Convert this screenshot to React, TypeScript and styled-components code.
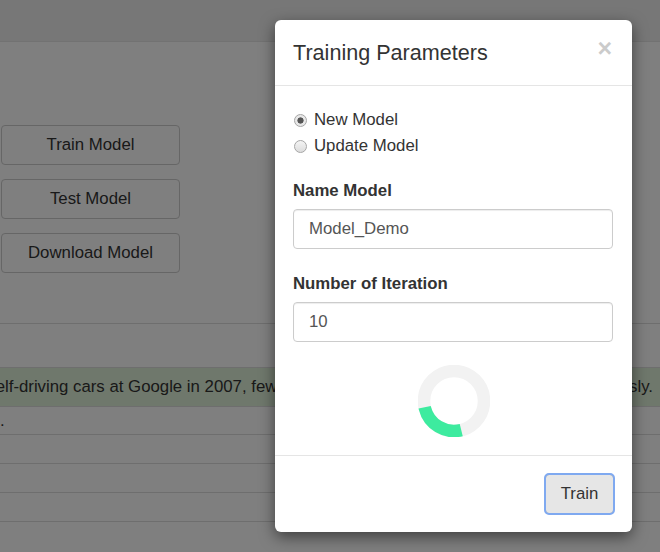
import React from "react";
import styled, { createGlobalStyle } from "styled-components";

const GlobalStyle = createGlobalStyle`
  html, body {
    margin: 0;
    padding: 0;
    width: 660px;
    height: 552px;
    overflow: hidden;
    background: #fff;
    font-family: "Liberation Sans", Arial, sans-serif;
    color: #333;
  }
  * { box-sizing: border-box; }
`;

const Page = styled.div`
  position: relative;
  width: 660px;
  height: 552px;
  overflow: hidden;
  background: #fff;
`;

const Navbar = styled.div`
  height: 42px;
  background: #eee;
  border-bottom: 1px solid #e4e4e4;
`;

const Content = styled.div`
  padding: 83px 0 0 1px;
`;

const ActionList = styled.div`
  display: flex;
  flex-direction: column;
  gap: 14px;
  width: 179px;
`;

const ActionButton = styled.button`
  height: 40px;
  background: #fff;
  border: 1px solid #ccc;
  border-radius: 4px;
  font-family: inherit;
  font-size: 16.8px;
  color: #333;
`;

const Divider = styled.div`
  margin-top: 50px;
  border-top: 1px solid #ddd;
  height: 44px;
`;

const Table = styled.div`
  display: flex;
  flex-direction: column;
`;

const Row = styled.div<{ $success?: boolean; $h: number }>`
  height: ${(p) => p.$h}px;
  display: flex;
  align-items: center;
  justify-content: flex-end;
  overflow: hidden;
  white-space: nowrap;
  padding-right: 7px;
  font-size: 16.8px;
  border-top: 1px solid #ddd;
  background: ${(p) => (p.$success ? "#dff0d8" : "transparent")};
  color: #333;
`;

const DotRow = styled(Row)`
  justify-content: flex-start;
  padding: 0;
`;

const Backdrop = styled.div`
  position: absolute;
  inset: 0;
  background: rgba(0, 0, 0, 0.5);
`;

const Modal = styled.div`
  position: absolute;
  left: 275px;
  top: 20px;
  width: 357px;
  background: #fff;
  border-radius: 6px;
  box-shadow: 0 5px 15px rgba(0, 0, 0, 0.5);
  overflow: hidden;
`;

const Header = styled.div`
  display: flex;
  align-items: flex-start;
  justify-content: space-between;
  padding: 18px;
  border-bottom: 1px solid #e5e5e5;
`;

const Title = styled.h4`
  margin: 0;
  font-size: 21.6px;
  font-weight: 400;
  line-height: 29px;
  color: #333;
`;

const Close = styled.span`
  font-size: 25px;
  font-weight: 700;
  line-height: 20px;
  color: #000;
  opacity: 0.2;
  margin-right: 2px;
`;

const Body = styled.div`
  padding: 21px 18px 18px;
`;

const RadioLabel = styled.label`
  display: flex;
  align-items: center;
  gap: 7px;
  height: 26px;
  font-size: 16.8px;
  color: #333;
`;

const RadioDot = styled.span<{ $checked?: boolean }>`
  width: 13px;
  height: 13px;
  border-radius: 50%;
  border: 1px solid #a6a6a6;
  background: ${(p) =>
    p.$checked
      ? "radial-gradient(circle, #555 0 2.8px, #e8e8e8 3.4px)"
      : "linear-gradient(#f4f4f4, #dcdcdc)"};
  margin-left: 1px;
`;

const FieldLabel = styled.label<{ $gap: number }>`
  display: block;
  margin-top: ${(p) => p.$gap}px;
  margin-bottom: 7px;
  font-size: 16.8px;
  line-height: 23px;
  font-weight: 700;
  color: #333;
`;

const Input = styled.input`
  display: block;
  width: 320px;
  height: 40px;
  padding: 0 15px;
  border: 1px solid #ccc;
  border-radius: 4px;
  font-family: inherit;
  font-size: 16.8px;
  color: #555;
  box-shadow: inset 0 1px 1px rgba(0, 0, 0, 0.075);
`;

const SpinnerWrap = styled.div`
  display: flex;
  justify-content: center;
  margin-top: 23px;
  padding-left: 1px;
`;

const Footer = styled.div`
  display: flex;
  justify-content: flex-end;
  padding: 18px;
  border-top: 1px solid #e5e5e5;
`;

const TrainButton = styled.button`
  width: 69px;
  height: 40px;
  background: #e6e6e6;
  border: 1px solid #adadad;
  border-radius: 4px;
  outline: 2px solid #7fa9f0;
  outline-offset: -1px;
  font-family: inherit;
  font-size: 16.8px;
  color: #333;
`;

const Spinner: React.FC = () => {
  const r = 30;
  const c = 2 * Math.PI * r;
  const arc = (92 / 360) * c;
  return (
    <svg width="72" height="72" viewBox="0 0 72 72">
      <circle cx="36" cy="36" r={r} fill="none" stroke="#f2f2f2" strokeWidth="12.5" />
      <circle
        cx="36"
        cy="36"
        r={r}
        fill="none"
        stroke="#3deb9f"
        strokeWidth="12.5"
        strokeDasharray={`${arc} ${c}`}
        transform="rotate(76 36 36)"
      />
    </svg>
  );
};

const App: React.FC = () => {
  return (
    <>
      <GlobalStyle />
      <Page>
        <Navbar />
        <Content>
          <ActionList>
            <ActionButton>Train Model</ActionButton>
            <ActionButton>Test Model</ActionButton>
            <ActionButton>Download Model</ActionButton>
          </ActionList>
        </Content>
        <Divider />
        <Table>
          <Row $success $h={39}>
            Since Sebastian Thrun started working on self-driving cars at Google in 2007, few people
            believed robots would drive autonomously.
          </Row>
          <DotRow $h={28}>.</DotRow>
          <Row $h={29} />
          <Row $h={29} />
          <Row $h={29} />
          <Row $h={29} />
        </Table>
        <Backdrop />
        <Modal>
          <Header>
            <Title>Training Parameters</Title>
            <Close>×</Close>
          </Header>
          <Body>
            <RadioLabel>
              <RadioDot $checked />
              New Model
            </RadioLabel>
            <RadioLabel>
              <RadioDot />
              Update Model
            </RadioLabel>
            <FieldLabel $gap={20}>Name Model</FieldLabel>
            <Input defaultValue="Model_Demo" />
            <FieldLabel $gap={23}>Number of Iteration</FieldLabel>
            <Input defaultValue="10" />
            <SpinnerWrap>
              <Spinner />
            </SpinnerWrap>
          </Body>
          <Footer>
            <TrainButton>Train</TrainButton>
          </Footer>
        </Modal>
      </Page>
    </>
  );
};

export default App;
